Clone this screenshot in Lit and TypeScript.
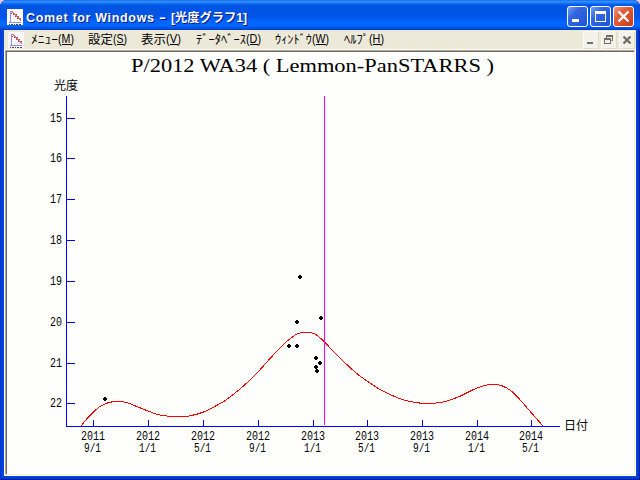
import { LitElement, html, svg, css } from "lit";
import { customElement } from "lit/decorators.js";

const magTicks: [number, number][] = [[15, 118], [16, 158], [17, 199], [18, 240], [19, 281], [20, 322], [21, 363], [22, 403]];
const dateTicks: [string, string, number][] = [
  ["2011", "9/1", 93], ["2012", "1/1", 148], ["2012", "5/1", 203], ["2012", "9/1", 258], ["2013", "1/1", 313],
  ["2013", "5/1", 367], ["2013", "9/1", 422], ["2014", "1/1", 477], ["2014", "5/1", 531],
];
const points: [number, number][] = [[105, 399], [300, 277], [297, 322], [321, 318], [289, 346], [297, 346], [316, 358], [320, 363], [316, 367], [317, 371]];
const curve: [number, number][] = [
  [81, 426], [88, 417.5], [93, 412.5], [100, 406.5], [108, 402.8], [117, 401.4], [126, 402.3], [136, 406.2], [148, 411], [158, 414.5], [168, 416.2], [178, 416.6], [188, 416.2],
  [203, 412.2], [222, 402.5], [230, 397], [240, 389], [249, 381], [258, 372], [270, 358.5], [283, 344.8], [289, 339.7], [297, 334], [305, 332], [315, 334], [324, 341.5],
  [332, 350], [340, 358], [350, 367.5], [358, 374.5], [367, 381], [380, 389.5], [390, 394.5], [400, 398.7], [410, 401.5], [422, 403.3], [433, 403.3], [445, 401.7],
  [460, 396.2], [473, 389.8], [484, 385.6], [494, 384.2], [502, 385.8], [512, 391.5], [522, 402], [532, 413.5], [543, 426],
];

// Catmull-Rom interpolation of the light curve
function smooth(p: [number, number][]) {
  let d = `M${p[0][0]} ${p[0][1]}`;
  for (let i = 0; i < p.length - 1; i++) {
    const a = p[Math.max(0, i - 1)], b = p[i], c = p[i + 1], e = p[Math.min(p.length - 1, i + 2)];
    d += `C${b[0] + (c[0] - a[0]) / 6} ${b[1] + (c[1] - a[1]) / 6} ${c[0] - (e[0] - b[0]) / 6} ${c[1] - (e[1] - b[1]) / 6} ${c[0]} ${c[1]}`;
  }
  return d;
}

const appIcon = html`<svg class="icon" width="16" height="16" viewBox="0 0 16 16" shape-rendering="crispEdges">
  <rect width="16" height="16" fill="#fbf9ff"/>
  <path d="M3.5 2V14M2 13.5H14" stroke="#8c8af6" fill="none"/>
  <path d="M4 2.5H6M5 3.5H7M6 4.5H8M7 5.5H9M8 6.5H10M9 7.5H11M10 8.5H12M11 9.5H13M12 10.5H14M13 11.5H14" stroke="#e07070"/>
  <path d="M4 4.5H5M6 5.5H7M9 5.5H10M8 7.5H9M11 7.5H12M10 9.5H11M13 9.5H14" stroke="#8a5050"/>
  <path d="M2 15.5H3M4 15.5H6M7 15.5H8M9 15.5H11M12 15.5H14" stroke="#444"/>
</svg>`;

@customElement("app-root")
export class AppRoot extends LitElement {
  static styles = css`
    :host { display: block; width: 640px; height: 480px; background: #e9c5ee; }
    * { box-sizing: border-box; }
    .window { width: 640px; height: 480px; border-radius: 7px 7px 0 0; overflow: hidden; display: flex; flex-direction: column; background: #0046dc; }
    .title { height: 30px; flex: none; display: flex; align-items: center; padding: 3px 6px 0 7px; background: linear-gradient(#0058e6 0, #3a93ff 1px, #1b7bf6 3px, #0058e6 5px, #0054e3 9px, #0055e8 17px, #0066ff 22px, #0066ff 26px, #0052dd 28px, #003dc4 30px); }
    .caption { flex: 1; margin-left: 3px; }
    .buttons { display: flex; gap: 2px; }
    .menu { height: 19px; flex: none; margin: 0 4px; background: #ece9d8; display: flex; align-items: center; padding: 0 1px 0 4px; }
    .items { flex: 1; height: 19px; }
    .mdi { display: flex; gap: 2px; }
    svg { display: block; flex: none; }
    .client { flex: 1; margin: 0 4px 4px; background: #fffef8; padding: 1px 1px 1px 1px; }
    .canvas { height: 100%; border: 1px solid #aca899; border-right-color: #f1efe2; border-bottom-color: #f1efe2; background: #fefffc; box-shadow: inset 1px 1px #716f64; }
    .frame { box-shadow: inset 1px 0 #0831d9, inset -1px 0 #001ea0, inset 0 -1px #001ea0, inset -2px -2px #0036cf; }
    .ui { font-family: "Liberation Sans", "Noto Sans CJK JP", sans-serif; font-size: 12px; }
    .bold { font-family: "Liberation Sans", "Noto Sans CJK JP", sans-serif; font-size: 12.5px; font-weight: 700; fill: #fff; text-shadow: 1px 1px #0a1883; }
    .label { font-family: "Liberation Mono", "Noto Sans CJK JP", monospace; font-size: 12px; }
    .heading { font-family: "Liberation Serif", serif; font-size: 19px; }
  `;

  menuItem(x: number, w: number, name: string, nameWidth: number, key: string) {
    const keyX = x + nameWidth;
    return svg`<text class="ui" x=${x} y="14" textLength=${nameWidth} lengthAdjust="spacingAndGlyphs">${name}</text>
      <text class="ui" x=${keyX} y="13" textLength=${w - nameWidth - 1} lengthAdjust="spacingAndGlyphs">(${key})</text>
      <rect x=${keyX + 4} y="14" width=${w - nameWidth - 8} height="1"/>`;
  }

  controlButton(kind: string) {
    const close = kind === "close";
    const id = `face-${kind}`;
    return html`<svg width="21" height="21" viewBox="0 0 21 21">
      <defs>
        <linearGradient id=${id} x2="1" y2="1"><stop stop-color=${close ? "#ef9d83" : "#7ca5f7"}/><stop offset=".35" stop-color=${close ? "#e45f3c" : "#3566e2"}/><stop offset="1" stop-color=${close ? "#cb3512" : "#1c52d2"}/></linearGradient>
      </defs>
      <rect x=".5" y=".5" width="20" height="20" rx="2.5" fill="url(#${id})" stroke="#fff"/>
      ${kind === "min" ? svg`<rect x="5" y="13" width="7" height="3" fill="#fff"/>`
        : kind === "max" ? svg`<path d="M5 5H16V16H5Z M6 8V15H15V8Z" fill="#fff" fill-rule="evenodd"/>`
        : svg`<path d="M5.5 5.5L15.5 15.5M15.5 5.5L5.5 15.5" stroke="#fff" stroke-width="2.4"/>`}
    </svg>`;
  }

  mdiButton(kind: string) {
    return html`<svg width="16" height="18" viewBox="0 0 16 18">
      <rect x=".5" y=".5" width="15" height="17" fill="#f3f2ea" stroke="#fbfaf6"/>
      <path d="M1 17.5H16M15.5 1V18" stroke="#dfdccb"/>
      ${kind === "min" ? svg`<rect x="4" y="11" width="6" height="2" fill="#706e62"/>`
        : kind === "restore" ? svg`<path d="M5 4H12V10H10.5V9H11V6H6V7H5ZM3 7H10V13H3ZM4 9V12H9V9Z" fill="#706e62" fill-rule="evenodd"/>`
        : svg`<path d="M4.5 5.5L11.5 12.5M11.5 5.5L4.5 12.5" stroke="#706e62" stroke-width="2.3"/>`}
    </svg>`;
  }

  render() {
    return html`<div class="window frame">
      <div class="title">
        ${appIcon}
        <svg class="caption" height="24">
          <text class="bold" x="0" y="17" textLength="128" lengthAdjust="spacing">Comet for Windows</text>
          <text class="bold" x="133" y="17" textLength="7" lengthAdjust="spacingAndGlyphs">-</text>
          <text class="bold" x="145" y="17" textLength="76" lengthAdjust="spacingAndGlyphs">[光度グラフ1]</text>
        </svg>
        <div class="buttons">${["min", "max", "close"].map((k) => this.controlButton(k))}</div>
      </div>
      <div class="menu">
        ${appIcon}
        <svg class="items" viewBox="24 0 558 19" preserveAspectRatio="xMinYMin">
          ${this.menuItem(31, 44, "ﾒﾆｭｰ", 27, "M")}
          ${this.menuItem(88, 40, "設定", 25, "S")}
          ${this.menuItem(141, 41, "表示", 25, "V")}
          ${this.menuItem(196, 66, "ﾃﾞｰﾀﾍﾞｰｽ", 50, "D")}
          ${this.menuItem(275, 55, "ｳｨﾝﾄﾞｳ", 37, "W")}
          ${this.menuItem(344, 41, "ﾍﾙﾌﾟ", 25, "H")}
        </svg>
        <div class="mdi">${["min", "restore", "close"].map((k) => this.mdiButton(k))}</div>
      </div>
      <div class="client"><div class="canvas">
        <svg width="628" height="420" viewBox="6 51 628 420">
          <text class="heading" x="131" y="72" textLength="363" lengthAdjust="spacingAndGlyphs">P/2012 WA34 ( Lemmon-PanSTARRS )</text>
          <text class="label" x="54" y="90">光度</text>
          <text class="label" x="564" y="430">日付</text>
          <g stroke="#0000ff" shape-rendering="crispEdges">
            <path d="M66.5 96V427M66 426.5H560" fill="none"/>
            ${magTicks.map(([, y]) => svg`<path d="M67 ${y + 0.5}H75"/>`)}
            ${dateTicks.map(([, , x]) => svg`<path d="M${x + 0.5} 420V426"/>`)}
          </g>
          ${magTicks.map(([m, y]) => svg`<text class="label" x="50" y=${y + 4} textLength="12" lengthAdjust="spacingAndGlyphs">${m}</text>`)}
          ${dateTicks.map(([a, b, x]) => svg`<text class="label" x=${x - 12} y="440" textLength="24" lengthAdjust="spacingAndGlyphs">${a}</text>
            <text class="label" x=${x - 9} y="452" textLength="17" lengthAdjust="spacingAndGlyphs">${b}</text>`)}
          <path d=${smooth(curve)} fill="none" stroke="#ff0000" shape-rendering="crispEdges"/>
          <path d="M324.5 96V425" stroke="#ff00ff" shape-rendering="crispEdges"/>
          ${points.map(([x, y]) => svg`<path d="M${x - 1} ${y - 2}h2v1h1v2h-1v1h-2v-1h-1v-2h1z" fill="#000" shape-rendering="crispEdges"/>`)}
        </svg>
      </div></div>
    </div>`;
  }
}
